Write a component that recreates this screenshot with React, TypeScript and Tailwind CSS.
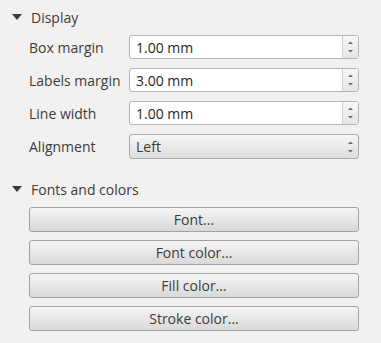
import React from 'react';

const fields = [
  { label: 'Box margin', value: '1.00 mm' },
  { label: 'Labels margin', value: '3.00 mm' },
  { label: 'Line width', value: '1.00 mm' },
];

const buttons = ['Font...', 'Font color...', 'Fill color...', 'Stroke color...'];

const Caret = () => (
  <svg width="10" height="6" viewBox="0 0 10 6" className="shrink-0">
    <path d="M0 0 L10 0 L5 6 Z" fill="#3c3c3c" />
  </svg>
);

const SpinArrows = () => (
  <svg width="7" height="14" viewBox="0 0 7 14">
    <path d="M1 4 L6 4 L3.5 1.5 Z" fill="#6a6a6a" />
    <path d="M1 10 L6 10 L3.5 12.5 Z" fill="#6a6a6a" />
  </svg>
);

const SectionHeader: React.FC<{ title: string }> = ({ title }) => (
  <div className="flex items-center h-[18px] pl-3 gap-[9px]">
    <Caret />
    <span>{title}</span>
  </div>
);

const App: React.FC = () => {
  return (
    <div className="w-[381px] h-[343px] bg-[#f2f1f0] font-['Open_Sans',sans-serif] text-[14px] text-[#3c3c3c] pt-2">
      <SectionHeader title="Display" />

      <div className="flex flex-col gap-[9px] mt-[9px] pl-[29px] pr-[22px]">
        {fields.map((f) => (
          <div key={f.label} className="flex items-center h-6">
            <span className="w-[100px] shrink-0">{f.label}</span>
            <div className="flex flex-1 h-6 bg-white border border-[#b5b5b5] rounded-[3px] overflow-hidden">
              <span className="flex-1 flex items-center pl-[6px] text-[#1f1f1f]">{f.value}</span>
              <div className="w-4 flex items-center justify-center border-l border-[#d0d0d0] bg-gradient-to-b from-[#f7f7f7] to-[#e6e6e6]">
                <SpinArrows />
              </div>
            </div>
          </div>
        ))}
        <div className="flex items-center h-[25px]">
          <span className="w-[100px] shrink-0">Alignment</span>
          <div className="flex flex-1 h-[25px] items-center border border-[#a9a9a9] rounded-[3px] bg-gradient-to-b from-[#f7f7f7] to-[#dcdcdc] pl-[6px] pr-1">
            <span className="flex-1">Left</span>
            <SpinArrows />
          </div>
        </div>
      </div>

      <div className="mt-[21px]">
        <SectionHeader title="Fonts and colors" />
      </div>

      <div className="flex flex-col gap-2 mt-[9px] pl-[29px] pr-[22px]">
        {buttons.map((b) => (
          <button
            key={b}
            className="h-[25px] w-full border border-[#a3a3a3] rounded-[3px] bg-gradient-to-b from-[#f5f5f5] to-[#d9d9d9] text-[#3c3c3c] text-[14px] flex items-center justify-center"
          >
            {b}
          </button>
        ))}
      </div>
    </div>
  );
};

export default App;
